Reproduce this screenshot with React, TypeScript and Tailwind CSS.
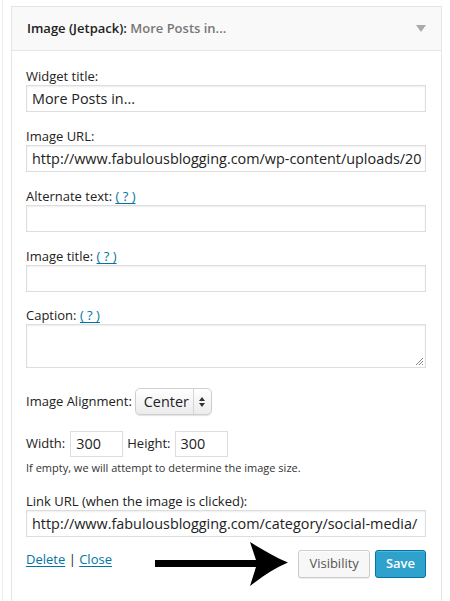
import React from 'react';

const FONT = "font-['Open_Sans',sans-serif]";

function Help() {
  return <a className="text-[#0074a2] underline underline-offset-2">( ? )</a>;
}

function Field({ label, help, value }: { label: string; help?: boolean; value?: string }) {
  return (
    <div className="mt-[15px] first:mt-0">
      <label className="block h-[18px] text-[13px] leading-[18px] text-[#222]">
        {label} {help && <Help />}
      </label>
      <div className="h-[27px] border border-[#ddd] shadow-[inset_0_1px_2px_rgba(0,0,0,0.07)] px-[5px] text-[14.4px] leading-[25px] text-[#222] whitespace-nowrap overflow-hidden">
        {value}
      </div>
    </div>
  );
}

function Arrow() {
  return (
    <svg width="134" height="46" viewBox="0 0 134 46" className="block">
      <path
        d="M0 19 H101 C99 13 97 7 95 1 C108 9 120 16 133 21.5 C120 27 108 35 95 45 C97 39 99 32 101 26 H0 Z"
        fill="#000"
      />
    </svg>
  );
}

export default function App() {
  return (
    <div className={`w-[450px] h-[601px] bg-white pl-[2px] ${FONT}`}>
      <div className="h-full border-l border-[#eeeeee] pl-[8px] pt-[6px]">
        <div className="w-[431px] border border-[#e5e5e5] bg-white">
          {/* header */}
          <div className="h-[44px] bg-[#f9f9f9] border-b border-[#e5e5e5] flex items-center pl-[15px] pr-[15px]">
            <h3 className="text-[13px] font-semibold text-[#222] flex-1">
              Image (Jetpack): <span className="text-[#777]">More Posts in...</span>
            </h3>
            <span className="w-0 h-0 border-l-[5px] border-r-[5px] border-t-[7px] border-l-transparent border-r-transparent border-t-[#aaa]" />
          </div>

          {/* body */}
          <div className="pl-[14px] pr-[15px] pt-[16px] pb-[15px]">
            <Field label="Widget title:" value="More Posts in..." />
            <Field label="Image URL:" value="http://www.fabulousblogging.com/wp-content/uploads/20" />
            <Field label="Alternate text:" help />
            <Field label="Image title:" help />
            <div className="mt-[14px]">
              <label className="block h-[18px] text-[13px] leading-[18px] text-[#222]">
                Caption: <Help />
              </label>
              <div className="relative h-[44px] border border-[#ddd] shadow-[inset_0_1px_2px_rgba(0,0,0,0.07)]">
                <svg width="9" height="9" viewBox="0 0 9 9" className="absolute right-[1px] bottom-[1px]">
                  <path d="M8 1 L1 8 M8 4 L4 8 M8 7 L7 8" stroke="#888" strokeWidth="1" />
                </svg>
              </div>
            </div>

            {/* alignment */}
            <div className="mt-[20px] flex items-center h-[27px] text-[13px] text-[#222]">
              <span>Image Alignment:</span>
              <div className="ml-[3px] h-[27px] w-[77px] flex items-stretch rounded-[5px] border border-[#cfcfcf] bg-gradient-to-b from-white to-[#ececec] shadow-[0_1px_1px_rgba(0,0,0,0.12)]">
                <span className="flex-1 flex items-center pl-[8px] text-[14.4px] text-[#222]">Center</span>
                <span className="w-[18px] border-l border-[#d5d5d5] flex flex-col items-center justify-center gap-[2px]">
                  <span className="w-0 h-0 border-l-[3px] border-r-[3px] border-b-[4px] border-l-transparent border-r-transparent border-b-[#333]" />
                  <span className="w-0 h-0 border-l-[3px] border-r-[3px] border-t-[4px] border-l-transparent border-r-transparent border-t-[#333]" />
                </span>
              </div>
            </div>

            {/* width / height */}
            <div className="mt-[16px] flex items-center h-[26px] text-[13px] text-[#222]">
              <span>Width:</span>
              <div className="ml-[5px] w-[53px] h-[26px] border border-[#ddd] px-[5px] text-[14.4px] leading-[24px]">300</div>
              <span className="ml-[4px]">Height:</span>
              <div className="ml-[4px] w-[53px] h-[26px] border border-[#ddd] px-[5px] text-[14.4px] leading-[24px]">300</div>
            </div>
            <p className="mt-[4px] text-[11px] leading-[14px] text-[#333]">
              If empty, we will attempt to determine the image size.
            </p>

            <div className="mt-[17px]">
              <label className="block h-[18px] text-[13px] leading-[18px] text-[#222]">
                Link URL (when the image is clicked):
              </label>
              <div className="h-[27px] border border-[#ddd] shadow-[inset_0_1px_2px_rgba(0,0,0,0.07)] px-[5px] text-[14.4px] leading-[25px] text-[#222] whitespace-nowrap overflow-hidden">
                http://www.fabulousblogging.com/category/social-media/
              </div>
            </div>

            {/* actions */}
            <div className="mt-[4px] flex items-center h-[46px]">
              <div className="self-start mt-[9px] text-[13px] leading-[18px] text-[#222]">
                <a className="text-[#0074a2] underline underline-offset-2">Delete</a> |{' '}
                <a className="text-[#0074a2] underline underline-offset-2">Close</a>
              </div>
              <div className="flex-1" />
              <Arrow />
              <button className="ml-[9px] h-[28px] px-[10px] rounded-[3px] border border-[#ccc] bg-[#f7f7f7] shadow-[0_1px_0_#fff_inset,0_1px_0_rgba(0,0,0,0.08)] text-[13px] text-[#555]">
                Visibility
              </button>
              <button className="ml-[5px] h-[28px] px-[10px] rounded-[3px] border border-[#0074a2] bg-[#2ea2cc] shadow-[inset_0_1px_0_rgba(120,200,230,0.5)] text-[13px] font-semibold text-white">
                Save
              </button>
            </div>
          </div>
        </div>
      </div>
    </div>
  );
}
